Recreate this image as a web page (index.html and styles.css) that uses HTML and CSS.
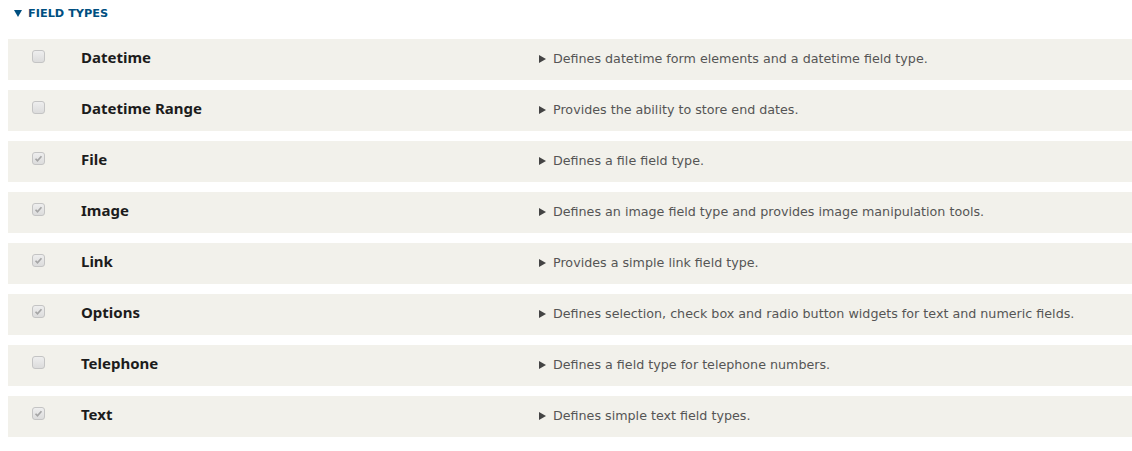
FILE: index.html
```html
<!DOCTYPE html>
<html>
<head>
  <title>Field types</title>
  <link rel="stylesheet" href="styles.css">
</head>
<body>
  <details class="group" open>
    <summary class="group-title">Field types</summary>
    <div class="module-list">
      <div class="module">
        <span class="check"></span>
        <span class="name">Datetime</span>
        <span class="desc">Defines datetime form elements and a datetime field type.</span>
      </div>
      <div class="module">
        <span class="check"></span>
        <span class="name">Datetime Range</span>
        <span class="desc">Provides the ability to store end dates.</span>
      </div>
      <div class="module">
        <span class="check checked"><svg viewBox="0 0 13 13"><path d="M3 6.8l2.3 2.4L10 3.8" /></svg></span>
        <span class="name">File</span>
        <span class="desc">Defines a file field type.</span>
      </div>
      <div class="module">
        <span class="check checked"><svg viewBox="0 0 13 13"><path d="M3 6.8l2.3 2.4L10 3.8" /></svg></span>
        <span class="name">Image</span>
        <span class="desc">Defines an image field type and provides image manipulation tools.</span>
      </div>
      <div class="module">
        <span class="check checked"><svg viewBox="0 0 13 13"><path d="M3 6.8l2.3 2.4L10 3.8" /></svg></span>
        <span class="name">Link</span>
        <span class="desc">Provides a simple link field type.</span>
      </div>
      <div class="module">
        <span class="check checked"><svg viewBox="0 0 13 13"><path d="M3 6.8l2.3 2.4L10 3.8" /></svg></span>
        <span class="name">Options</span>
        <span class="desc">Defines selection, check box and radio button widgets for text and numeric fields.</span>
      </div>
      <div class="module">
        <span class="check"></span>
        <span class="name">Telephone</span>
        <span class="desc">Defines a field type for telephone numbers.</span>
      </div>
      <div class="module">
        <span class="check checked"><svg viewBox="0 0 13 13"><path d="M3 6.8l2.3 2.4L10 3.8" /></svg></span>
        <span class="name">Text</span>
        <span class="desc">Defines simple text field types.</span>
      </div>
    </div>
  </details>
</body>
</html>
```

FILE: styles.css
```css
body {
  margin: 0;
  padding: 0 0 0 8px;
  background: #fff;
  font-family: "Noto Sans", sans-serif;
  color: #222;
}

.group-title {
  list-style: none;
  display: flex;
  align-items: center;
  height: 26px;
  padding-left: 6px;
  font-family: "DejaVu Sans", sans-serif;
  font-size: 11.3px;
  font-weight: bold;
  text-transform: uppercase;
  color: #004f80;
  cursor: pointer;
}

.group-title::-webkit-details-marker {
  display: none;
}

.group-title::before {
  content: "";
  width: 0;
  height: 0;
  border-left: 4px solid transparent;
  border-right: 4px solid transparent;
  border-top: 7px solid #004f80;
  margin-right: 6px;
}

.module-list {
  display: flex;
  flex-direction: column;
  gap: 10px;
  margin-top: 13px;
}

.module {
  box-sizing: border-box;
  display: flex;
  align-items: baseline;
  height: 41px;
  padding-top: 8px;
  background: #f2f1eb;
}

.check {
  align-self: flex-start;
  box-sizing: border-box;
  width: 13px;
  height: 13px;
  margin: 3px 0 0 24px;
  border: 1px solid #c4c4c4;
  border-radius: 3px;
  background: linear-gradient(#eeeeee, #dcdcdc);
}

.check svg {
  display: block;
  width: 11px;
  height: 11px;
}

.check path {
  fill: none;
  stroke: #a5a5a5;
  stroke-width: 2;
}

.name {
  width: 458px;
  margin-left: 36px;
  font-size: 15px;
  line-height: 20px;
  font-weight: bold;
  color: #1c1c1c;
}

.desc {
  font-family: "DejaVu Sans", sans-serif;
  font-size: 12.7px;
  line-height: 20px;
  color: #555;
}

.desc::before {
  content: "";
  display: inline-block;
  width: 0;
  height: 0;
  border-top: 4.5px solid transparent;
  border-bottom: 4.5px solid transparent;
  border-left: 7px solid #444;
  margin-right: 7px;
}
```
